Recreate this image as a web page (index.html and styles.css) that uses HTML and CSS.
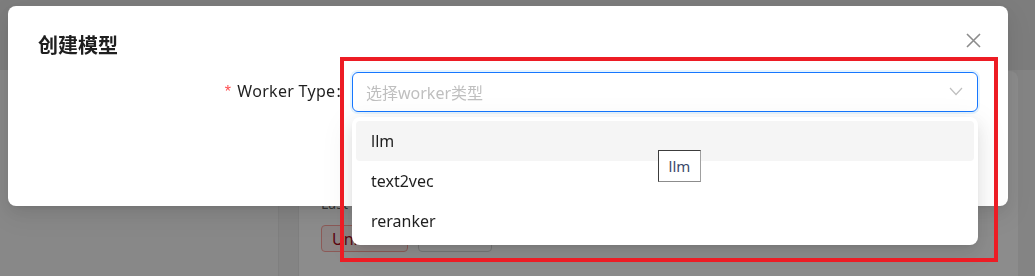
FILE: index.html
```html
<!DOCTYPE html>
<html lang="zh-CN">
<head>
    <meta charset="UTF-8">
    <title>创建模型</title>
    <link rel="stylesheet" href="styles.css">
</head>
<body>

    <!-- 뒤쪽 페이지 -->
    <div class="page">
        <div class="topbar"></div>
        <div class="layout">
            <aside class="side"></aside>
            <main class="main">
                <div class="card">
                    <div class="card-meta">Last</div>
                    <div class="card-actions">
                        <button class="btn btn-danger">Unh</button>
                        <button class="btn btn-plain"></button>
                    </div>
                </div>
            </main>
        </div>
    </div>

    <div class="mask"></div>

    <!-- 모달 -->
    <div class="modal">
        <div class="modal-head">
            <div class="modal-title">创建模型</div>
            <span class="modal-close">
                <svg width="15" height="15" viewBox="0 0 15 15">
                    <path d="M1 1 L14 14 M14 1 L1 14" stroke="#8c8c8c" stroke-width="1.6" fill="none"/>
                </svg>
            </span>
        </div>
        <div class="form-row">
            <label class="form-label"><span class="req">*</span>Worker Type</label>
            <div class="select">
                <span class="select-ph">选择worker类型</span>
                <svg class="select-arrow" width="14" height="9" viewBox="0 0 14 9">
                    <path d="M1 1 L7 7.5 L13 1" stroke="#bfbfbf" stroke-width="1.2" fill="none"/>
                </svg>
            </div>
        </div>
    </div>

    <!-- 드롭다운 -->
    <div class="dropdown">
        <div class="option option-active">llm</div>
        <div class="option">text2vec</div>
        <div class="option">reranker</div>
    </div>

    <div class="tip">llm</div>

    <div class="annot"></div>

</body>
</html>
```

FILE: styles.css
```css
        body {
            margin: 0;
            font-family: "Noto Sans", "Noto Sans CJK SC", sans-serif;
            color: rgba(0, 0, 0, 0.88);
        }

        /* 뒤쪽 페이지 */
        .page {
            height: 276px;
            overflow: hidden;
            background-color: #f5f5f5;
        }
        .topbar {
            height: 70px;
            background-color: #e4e4e4;
        }
        .layout {
            display: flex;
            height: 206px;
        }
        .side {
            width: 278px;
            background-color: #f7f7f7;
            border-right: 1px solid #e8e8e8;
        }
        .main {
            flex: 1;
            padding: 1px 17px 0 19px;
            background-color: #f0f0f0;
        }
        .card {
            height: 300px;
            padding: 122px 22px 0;
            background-color: #fff;
            border-radius: 8px;
            border-left: 1px solid #e8e8e8;
        }
        .card-meta {
            font-size: 14px;
            line-height: 22px;
            color: rgba(0, 0, 0, 0.65);
        }
        .card-actions {
            display: flex;
            gap: 10px;
            margin-top: 10px;
        }
        .btn {
            height: 27px;
            padding: 0 10px;
            font-family: inherit;
            font-size: 16px;
            text-align: left;
            background: #fff;
            border: 1px solid #d9d9d9;
            border-radius: 4px;
        }
        .btn-danger {
            width: 87px;
            color: #a8071a;
            background: #fff1f0;
            border-color: #ffa39e;
        }
        .btn-plain {
            width: 74px;
        }

        /* 마스크 */
        .mask {
            position: fixed;
            top: 0;
            left: 0;
            right: 0;
            bottom: 0;
            background-color: rgba(0, 0, 0, 0.45);
        }

        /* 모달 */
        .modal {
            position: fixed;
            top: 6px;
            left: 8px;
            width: 1000px;
            height: 200px;
            box-sizing: border-box;
            padding: 26px 30px 0 30px;
            background-color: #fff;
            border-radius: 8px;
            box-shadow: 0 6px 16px 0 rgba(0, 0, 0, 0.08),
                        0 3px 6px -4px rgba(0, 0, 0, 0.12),
                        0 9px 28px 8px rgba(0, 0, 0, 0.05);
        }
        .modal-head {
            display: flex;
            justify-content: space-between;
            align-items: flex-start;
            height: 39px;
        }
        .modal-title {
            font-size: 20px;
            line-height: 28px;
            font-weight: bold;
            color: #1f1f1f;
        }
        .modal-close {
            display: flex;
            margin-top: 1px;
            margin-right: -3px;
        }

        .form-row {
            display: flex;
            align-items: center;
        }
        .form-label {
            width: 314px;
            flex-shrink: 0;
            box-sizing: border-box;
            padding-right: 11px;
            text-align: right;
            font-size: 16px;
            line-height: 40px;
            letter-spacing: 0.3px;
        }
        .form-label::after {
            content: ":";
            margin-left: 1px;
        }
        .req {
            color: #ff4d4f;
            margin-right: 6px;
            font-family: "Liberation Sans", sans-serif;
        }
        .select {
            flex: 1;
            height: 40px;
            box-sizing: border-box;
            display: flex;
            align-items: center;
            justify-content: space-between;
            padding: 0 14px 0 13px;
            border: 1px solid #1677ff;
            border-radius: 6px;
            box-shadow: 0 0 0 2px rgba(5, 145, 255, 0.1);
        }
        .select-ph {
            font-size: 16px;
            color: #bfbfbf;
        }

        /* 드롭다운 */
        .dropdown {
            position: fixed;
            top: 117px;
            left: 352px;
            width: 626px;
            box-sizing: border-box;
            padding: 4px;
            background-color: #fff;
            border-radius: 8px;
            box-shadow: 0 6px 16px 0 rgba(0, 0, 0, 0.08),
                        0 3px 6px -4px rgba(0, 0, 0, 0.12),
                        0 9px 28px 8px rgba(0, 0, 0, 0.05);
        }
        .option {
            height: 40px;
            padding: 0 15px;
            font-size: 16px;
            line-height: 40px;
            border-radius: 4px;
        }
        .option-active {
            background-color: #f5f5f5;
        }

        /* 브라우저 툴팁 */
        .tip {
            position: fixed;
            top: 150px;
            left: 658px;
            width: 43px;
            height: 32px;
            box-sizing: border-box;
            text-align: center;
            font-size: 15px;
            line-height: 30px;
            color: #3b4a6b;
            background-color: #fff;
            border: 1px solid #3c3c3c;
            border-right-color: #a0a0a0;
            border-bottom-color: #8c8c8c;
        }

        /* 빨간 표시 박스 */
        .annot {
            position: fixed;
            top: 57px;
            left: 340px;
            width: 658px;
            height: 205px;
            box-sizing: border-box;
            border: 4px solid #ed1c24;
        }
```
